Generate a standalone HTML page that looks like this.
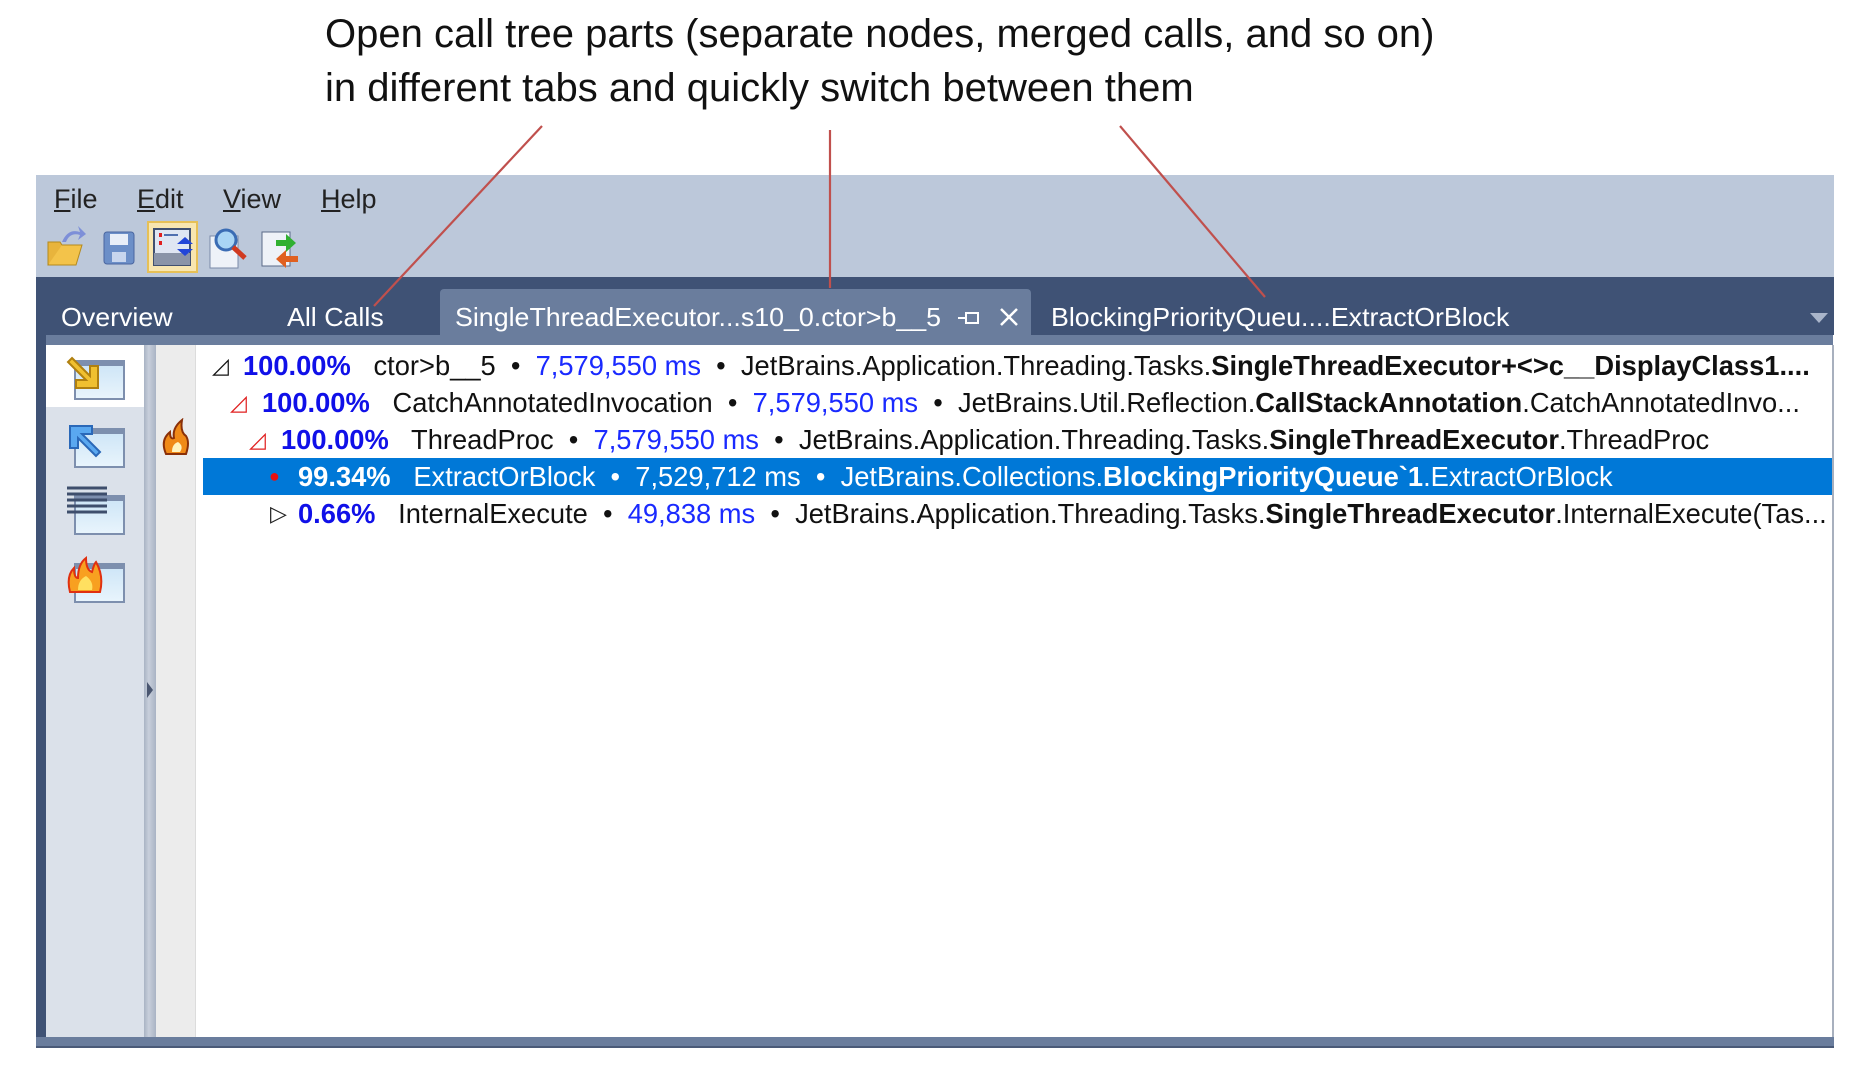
<!DOCTYPE html>
<html><head><meta charset="utf-8"><style>
*{margin:0;padding:0;box-sizing:border-box}
body{width:1869px;height:1071px;background:#fff;position:relative;overflow:hidden;font-family:"Liberation Sans",sans-serif}
.a{position:absolute}
.h{font-size:40px;color:#111;white-space:nowrap;transform:scaleX(1.0);transform-origin:left top}
.menu{font-size:27px;color:#222}
.menu u{text-decoration:underline}
.tab{font-size:26px;color:#fff;white-space:nowrap;transform:scaleX(1.03);transform-origin:left top}
.row{position:absolute;left:198px;width:1634px;height:37px;line-height:37px;font-size:27.3px;white-space:nowrap;overflow:hidden;color:#111}
.row .in{position:absolute;top:0}
.p{color:#1010e8;font-weight:bold}
.ms{color:#1a2aff}
.sel{background:#0078d7;color:#fff}
.sel .p,.sel .ms{color:#fff}
.win{position:absolute;left:74px;width:51px;height:40px;border:2px solid #7d8fae;background:linear-gradient(#cfe6f7,#e8f4fc);border-top-width:6px}
</style></head><body>
<div class="a h" style="left:325px;top:12px">Open call tree parts (separate nodes, merged calls, and so on)</div>
<div class="a h" style="left:325px;top:66px">in different tabs and quickly switch between them</div>

<div class="a" style="left:36px;top:175px;width:1798px;height:102px;background:#bcc8da"></div>
<div class="a menu" style="left:54px;top:184px"><u>F</u>ile</div>
<div class="a menu" style="left:137px;top:184px"><u>E</u>dit</div>
<div class="a menu" style="left:223px;top:184px"><u>V</u>iew</div>
<div class="a menu" style="left:321px;top:184px"><u>H</u>elp</div>
<svg class="a" style="left:40px;top:220px" width="270" height="56">
 <path d="M8 45 L14 25 L42 25 L36 45 Z" fill="#f3c34a" stroke="#b58a1c"/>
 <path d="M8 45 L8 22 L20 22 L22 25" fill="#e8b43c" stroke="#b58a1c"/>
 <path d="M22 22 Q28 8 40 12 L38 6 L46 14 L38 20 L40 15 Q30 12 26 22Z" fill="#7d8fd8"/>
 <rect x="64" y="12" width="30" height="32" rx="3" fill="#6c8fc8" stroke="#4a66a0"/>
 <rect x="70" y="14" width="18" height="11" fill="#e8eef8"/>
 <rect x="72" y="32" width="14" height="10" fill="#c8d6ee"/>
 <rect x="108" y="2" width="49" height="50" fill="#f8e6b0" stroke="#e6c057" stroke-width="2"/>
 <rect x="114" y="9" width="36" height="36" fill="#dfe6f3" stroke="#405070" stroke-width="2"/>
 <rect x="114" y="33" width="36" height="12" fill="#8a94a8"/>
 <path d="M137 24 L145 17 L153 24Z M137 29 L145 36 L153 29Z" fill="#2246d8"/>
 <rect x="119" y="13" width="3" height="4" fill="#e02020"/><rect x="124" y="14" width="14" height="2" fill="#5070b0"/>
 <rect x="119" y="21" width="3" height="4" fill="#e02020"/>
 <rect x="170" y="16" width="28" height="32" fill="#eef2f8" stroke="#7a8aa8"/>
 <circle cx="186" cy="20" r="10" fill="#a9d5f5" stroke="#3a6cb4" stroke-width="3"/>
 <path d="M193 27 L205 38" stroke="#d03a20" stroke-width="5"/>
 <rect x="222" y="12" width="28" height="34" fill="#eef2f8" stroke="#5a6a88"/>
 <path d="M236 20 L246 20 L246 14 L256 23 L246 32 L246 26 L236 26Z" fill="#30b030"/>
 <path d="M258 36 L246 36 L246 30 L236 39 L246 48 L246 42 L258 42Z" fill="#e06020"/>
</svg>
<div class="a" style="left:36px;top:277px;width:1798px;height:58px;background:#3f5275"></div>
<div class="a" style="left:440px;top:289px;width:591px;height:50px;background:#6a7d9d;border-radius:4px 4px 0 0"></div>
<div class="a" style="left:46px;top:335px;width:1787px;height:10px;background:#6a7d9d"></div>
<div class="a tab" style="left:61px;top:302px">Overview</div>
<div class="a tab" style="left:287px;top:302px">All Calls</div>
<div class="a tab" style="left:455px;top:302px">SingleThreadExecutor...s10_0.ctor&gt;b__5</div>
<svg class="a" style="left:956px;top:305px" width="70" height="26"><path d="M2 13 H10 M10 7 V19 M10 8 H22 V18 H10" stroke="#fff" stroke-width="2" fill="none"/><path d="M45 4 L61 20 M61 4 L45 20" stroke="#fff" stroke-width="2.5"/></svg>
<div class="a tab" style="left:1051px;top:302px">BlockingPriorityQueu....ExtractOrBlock</div>
<svg class="a" style="left:1810px;top:313px" width="20" height="12"><path d="M0 0 H18 L9 10Z" fill="#a9b5ca"/></svg>
<div class="a" style="left:36px;top:335px;width:10px;height:713px;background:#3f5275"></div>
<div class="a" style="left:46px;top:345px;width:98px;height:692px;background:#dbe1ea"></div>
<div class="a" style="left:46px;top:345px;width:98px;height:62px;background:#fff"></div>
<div class="a" style="left:144px;top:345px;width:12px;height:692px;background:linear-gradient(90deg,#a9b3c4,#c8cfdb 40%,#a9b3c4)"></div>
<svg class="a" style="left:146px;top:682px" width="8" height="20"><path d="M1 0 L7 8 L1 16Z" fill="#4a5670"/></svg>
<div class="a" style="left:156px;top:345px;width:40px;height:692px;background:#ececec;border-right:1px solid #dcdcdc"></div>
<div class="a" style="left:36px;top:1037px;width:1798px;height:11px;background:#6a7d9d;border-bottom:2px solid #4a5a78"></div>
<div class="a" style="left:1832px;top:345px;width:2px;height:692px;background:#a8b0be"></div>
<div class="win" style="top:360px"></div>
<svg class="a" style="left:66px;top:354px" width="40" height="40"><path d="M6 4 L24 22 L24 12 L32 12 L32 34 L10 34 L10 26 L20 26 L2 8Z" fill="#f0c030" stroke="#b08010" stroke-width="2"/></svg>
<div class="win" style="top:428px"></div>
<svg class="a" style="left:66px;top:422px" width="40" height="40"><path d="M30 34 L12 16 L12 26 L4 26 L4 4 L26 4 L26 12 L16 12 L34 30Z" fill="#5aa8f0" stroke="#2a68b8" stroke-width="2"/></svg>
<div class="win" style="top:495px"></div>
<svg class="a" style="left:67px;top:486px" width="40" height="32"><g stroke="#3e4e6c" stroke-width="3"><path d="M0 2H40M0 8H40M0 14H40M0 20H40M0 26H40"/></g></svg>
<div class="win" style="top:563px"></div>
<svg class="a" style="left:66px;top:556px" width="40" height="40"><path d="M4 36 Q0 20 8 12 Q8 22 12 22 Q12 8 20 2 Q20 14 26 16 Q28 8 30 6 Q38 20 34 36Z" fill="#f8a020" stroke="#e03010" stroke-width="2"/><path d="M12 34 Q12 24 20 20 Q28 26 26 34Z" fill="#ffe060"/></svg>
<svg class="a" style="left:160px;top:418px" width="32" height="40"><path d="M6 36 Q0 22 10 14 Q10 22 14 20 Q12 10 22 2 Q20 14 26 18 Q30 24 26 36Z" fill="#f08a18" stroke="#8a3008" stroke-width="2"/><path d="M12 34 Q12 26 18 24 Q24 28 20 34Z" fill="#fff4c0"/></svg>
<div class="row" style="top:347px"><div class="in" style="left:14px;font-size:22px">◿</div><div class="in" style="left:45px"><span class="p">100.00%</span>&nbsp;&nbsp; ctor&gt;b__5 &nbsp;•&nbsp; <span class="ms">7,579,550 ms</span> &nbsp;•&nbsp; JetBrains.Application.Threading.Tasks.<b>SingleThreadExecutor+&lt;&gt;c__DisplayClass1....</b></div></div>
<div class="row" style="top:384px"><div class="in" style="left:32px;color:#e02020;font-size:22px">◿</div><div class="in" style="left:64px"><span class="p">100.00%</span>&nbsp;&nbsp; CatchAnnotatedInvocation &nbsp;•&nbsp; <span class="ms">7,579,550 ms</span> &nbsp;•&nbsp; JetBrains.Util.Reflection.<b>CallStackAnnotation</b>.CatchAnnotatedInvo...</div></div>
<div class="row" style="top:421px"><div class="in" style="left:51px;color:#e02020;font-size:22px">◿</div><div class="in" style="left:83px"><span class="p">100.00%</span>&nbsp;&nbsp; ThreadProc &nbsp;•&nbsp; <span class="ms">7,579,550 ms</span> &nbsp;•&nbsp; JetBrains.Application.Threading.Tasks.<b>SingleThreadExecutor</b>.ThreadProc</div></div>
<div class="row sel" style="top:458px;left:203px;width:1629px"><div class="in" style="left:66px;color:#e81010;font-size:18px">●</div><div class="in" style="left:95px"><span class="p">99.34%</span>&nbsp;&nbsp; ExtractOrBlock &nbsp;•&nbsp; <span class="ms">7,529,712 ms</span> &nbsp;•&nbsp; JetBrains.Collections.<b>BlockingPriorityQueue`1</b>.ExtractOrBlock</div></div>
<div class="row" style="top:495px"><div class="in" style="left:72px;color:#222;font-size:22px">▷</div><div class="in" style="left:100px"><span class="p">0.66%</span>&nbsp;&nbsp; InternalExecute &nbsp;•&nbsp; <span class="ms">49,838 ms</span> &nbsp;•&nbsp; JetBrains.Application.Threading.Tasks.<b>SingleThreadExecutor</b>.InternalExecute(Tas...</div></div>
<svg class="a" style="left:0;top:0" width="1869" height="320"><g stroke="#c0504d" stroke-width="2.2"><path d="M542 126 L374 306"/><path d="M830 130 L830 288"/><path d="M1120 126 L1265 297"/></g></svg>
</body></html>
